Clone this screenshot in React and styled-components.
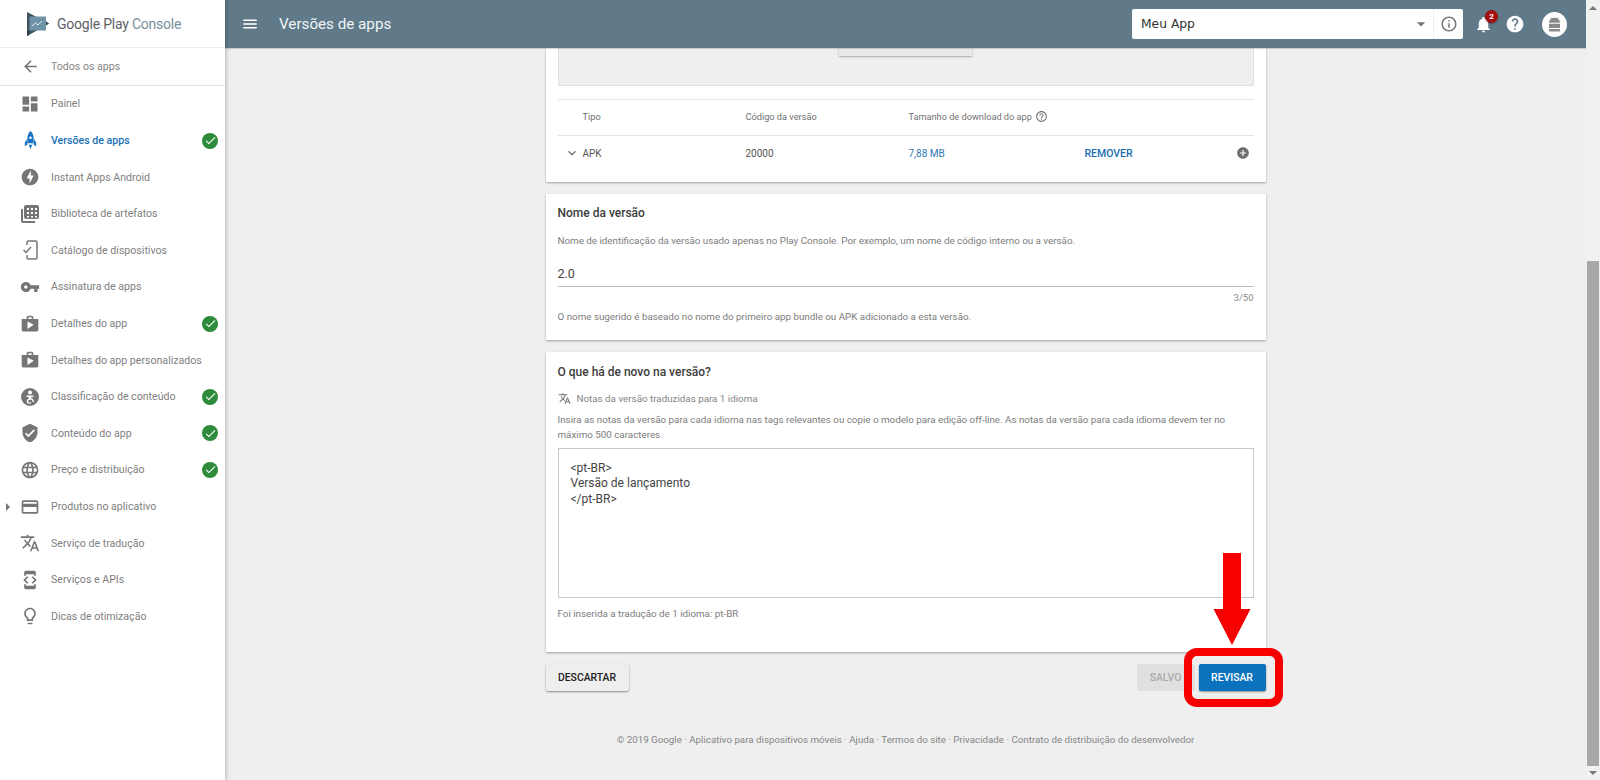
import React from 'react';
import styled, { createGlobalStyle } from 'styled-components';
import {
  MdArrowBack, MdDashboard, MdOfflineBolt, MdVpnKey, MdShop, MdVerifiedUser, MdLanguage,
  MdCreditCard, MdTranslate, MdDeveloperMode, MdLightbulbOutline, MdMenu, MdArrowDropDown,
  MdInfoOutline, MdNotifications, MdHelp, MdAddCircle, MdExpandMore, MdHelpOutline,
  MdCheck,
} from 'react-icons/md';

const GlobalStyle = createGlobalStyle`
  html, body { margin: 0; height: 100%; overflow: hidden; background: #efefef; }
  body { font-family: Roboto, "Liberation Sans", sans-serif; color: #212121; }
  #root { height: 100%; }
`;

const Page = styled.div`
  display: flex;
  height: 780px;
  width: 1600px;
  overflow: hidden;
`;

const Sidebar = styled.aside`
  flex: 0 0 225px;
  background: #fff;
  box-shadow: 1px 0 4px rgba(0, 0, 0, 0.25);
  z-index: 3;
`;

const Brand = styled.div`
  height: 47px;
  display: flex;
  align-items: center;
  padding-left: 26px;
  border-bottom: 1px solid #ececec;
`;

const BrandName = styled.span`
  margin-left: 7px;
  font-size: 14px;
  letter-spacing: -0.22px;
  color: #5f6368;
`;

const BrandLight = styled.span`
  color: #78909c;
`;

const BackRow = styled.div`
  height: 36.7px;
  display: flex;
  align-items: center;
  padding-left: 21px;
  gap: 11px;
  border-bottom: 1px solid #e4e4e4;
  font-size: 10.6px;
  color: #858585;
  svg { color: #757575; }
`;

const NavRow = styled.div`
  height: 36.6px;
  display: flex;
  align-items: center;
  padding-right: 7px;
  font-size: 10.6px;
  color: ${p => (p.$active ? '#1a6fb5' : '#808080')};
  font-weight: ${p => (p.$active ? 500 : 400)};
`;

const CaretSlot = styled.div`
  width: 20px;
  display: flex;
  justify-content: center;
  padding-right: 4px;
  box-sizing: border-box;
`;

const Caret = styled.div`
  border-left: 4px solid #757575;
  border-top: 4px solid transparent;
  border-bottom: 4px solid transparent;
`;

const NavIcon = styled.div`
  width: 20px;
  height: 20px;
  margin-right: 11px;
  display: flex;
  align-items: center;
  justify-content: center;
  color: ${p => (p.$active ? '#1a73c0' : '#757575')};
`;

const CheckBadge = styled.div`
  margin-left: auto;
  width: 16px;
  height: 16px;
  border-radius: 50%;
  background: #2e8b3a;
  color: #fff;
  display: flex;
  align-items: center;
  justify-content: center;
`;

const MainColumn = styled.div`
  flex: 1;
  min-width: 0;
  display: flex;
  flex-direction: column;
`;

const TopBar = styled.header`
  height: 48px;
  flex: none;
  background: #607a89;
  display: flex;
  align-items: center;
  color: #fff;
  padding-left: 16px;
  box-shadow: 0 1px 1px rgba(0, 0, 0, 0.15);
  z-index: 2;
`;

const PageTitle = styled.div`
  margin-left: 20px;
  font-size: 15.2px;
  color: #f2f5f6;
`;

const AppSelect = styled.div`
  margin-left: auto;
  width: 331px;
  height: 30px;
  background: #fff;
  border-radius: 2px;
  display: flex;
  align-items: center;
  padding-left: 9px;
  box-sizing: border-box;
  color: #333;
  font-family: "DejaVu Sans", sans-serif;
  font-size: 12.3px;
`;

const SelectValue = styled.span`
  flex: 1;
`;

const SelectInfo = styled.div`
  width: 29px;
  height: 30px;
  margin-left: 2px;
  border-left: 1px solid #eee;
  display: flex;
  align-items: center;
  justify-content: center;
  color: #757575;
`;

const BarIcons = styled.div`
  display: flex;
  align-items: center;
  margin-left: 8px;
  margin-right: 19px;
`;

const BellWrap = styled.div`
  position: relative;
  width: 24px;
  height: 24px;
  display: flex;
  align-items: center;
  justify-content: center;
  margin-right: 10px;
`;

const Badge = styled.span`
  position: absolute;
  top: -2px;
  right: -3px;
  width: 13px;
  height: 13px;
  border-radius: 50%;
  background: #a50e0e;
  color: #fff;
  font-size: 8px;
  font-weight: 700;
  line-height: 13px;
  text-align: center;
  box-shadow: 0 1px 2px rgba(0, 0, 0, 0.3);
`;

const Avatar = styled.div`
  width: 25px;
  height: 25px;
  margin-left: 17px;
  border-radius: 50%;
  background: #fff;
  color: #8a8a8a;
  display: flex;
  align-items: center;
  justify-content: center;
`;

const Content = styled.main`
  flex: 1;
  width: 720px;
  margin: 0 auto;
  display: flex;
  flex-direction: column;
`;

const Card = styled.section`
  background: #fff;
  padding: ${p => p.$padding};
  margin-bottom: 12px;
  box-shadow: 0 1px 2px rgba(0, 0, 0, 0.32);
`;

const DropZone = styled.div`
  height: 38px;
  background: #efefef;
  border: 1px solid #e2e2e2;
  border-top: 0;
  box-sizing: border-box;
  display: flex;
  justify-content: center;
`;

const ClippedButton = styled.div`
  width: 133px;
  height: 8px;
  background: #e8e8e8;
  box-shadow: 0 1px 2px rgba(0, 0, 0, 0.3);
`;

const BundleTable = styled.div`
  margin-top: 13px;
  border-top: 1px solid #e4e4e4;
`;

const BundleRow = styled.div`
  height: ${p => (p.$head ? '36px' : '34px')};
  margin-bottom: ${p => (p.$head ? '0' : '2px')};
  padding-bottom: ${p => (p.$head ? '2px' : '0')};
  box-sizing: border-box;
  display: grid;
  grid-template-columns: 25px 163px 163px 176px 1fr 24px;
  align-items: center;
  font-size: ${p => (p.$head ? '9.2px' : '10px')};
  color: ${p => (p.$head ? '#6f6f6f' : '#555')};
  border-bottom: ${p => (p.$head ? '1px solid #e4e4e4' : '0')};
`;

const ToggleCell = styled.div`
  display: flex;
  justify-content: flex-end;
  padding-right: 3px;
  color: #757575;
`;

const SizeHead = styled.div`
  display: flex;
  align-items: center;
  gap: 3px;
  white-space: nowrap;
  color: #757575;
`;

const SizeValue = styled.div`
  color: #2f77b5;
`;

const RemoveLink = styled.div`
  color: #1a6eb0;
  font-weight: 500;
  font-size: 10.5px;
`;

const PlusCell = styled.div`
  color: #6f6f6f;
  display: flex;
  justify-content: flex-end;
  padding-right: 4px;
`;

const CardTitle = styled.h2`
  margin: 0;
  font-size: 12px;
  line-height: 14px;
  font-weight: 500;
  color: #3c3c3c;
`;

const Hint = styled.p`
  margin: ${p => p.$margin || '0'};
  font-size: 9.8px;
  line-height: 15.3px;
  color: #7d7d7d;
`;

const TextValue = styled.div`
  margin-top: 10.5px;
  height: 29px;
  box-sizing: border-box;
  border-bottom: 1px solid #bdbdbd;
  font-size: 12.5px;
  line-height: 31px;
  color: #444;
`;

const Counter = styled.div`
  margin-top: 5px;
  text-align: right;
  font-size: 9.5px;
  line-height: 12px;
  color: #8a8a8a;
`;

const TranslationLine = styled.div`
  margin-top: 12.5px;
  display: flex;
  align-items: center;
  gap: 6px;
  height: 15px;
  font-size: 9.8px;
  color: #858585;
  svg { color: #757575; }
`;

const NotesInput = styled.textarea`
  display: block;
  width: 100%;
  height: 150px;
  margin-top: 5px;
  padding: 12px 12px;
  box-sizing: border-box;
  border: 1px solid #c8c8c8;
  border-radius: 0;
  resize: none;
  outline: none;
  font-family: Roboto, sans-serif;
  font-size: 12px;
  line-height: 15.4px;
  color: #444;
`;

const ActionBar = styled.div`
  display: flex;
  align-items: flex-start;
  justify-content: space-between;
`;

const ActionGroup = styled.div`
  display: flex;
  gap: 4px;
`;

const Button = styled.button`
  height: 27px;
  width: ${p => p.$width};
  border: 0;
  border-radius: 2px;
  padding: 0;
  font-family: Roboto, sans-serif;
  font-size: 10.4px;
  font-weight: 500;
  background: ${p => p.$bg};
  color: ${p => p.$color};
  box-shadow: ${p => (p.$flat ? 'none' : '0 1px 2px rgba(0, 0, 0, 0.4)')};
`;

const RevisarSlot = styled.div`
  position: relative;
`;

const RedFrame = styled.div`
  position: absolute;
  top: -16px;
  left: -15px;
  width: 99px;
  height: 59px;
  box-sizing: border-box;
  border: 8px solid #f60000;
  border-radius: 13px;
`;

const RedArrow = styled.svg`
  position: absolute;
  top: -111px;
  left: 14px;
`;

const Footer = styled.footer`
  margin-top: 43px;
  text-align: center;
  font-size: 9.75px;
  line-height: 12px;
  color: #858585;
  white-space: nowrap;
`;

const ScrollBar = styled.div`
  flex: 0 0 14px;
  height: 780px;
  background: #f1f1f1;
  display: flex;
  flex-direction: column;
  align-items: center;
  z-index: 4;
`;

const ScrollArrow = styled.div`
  width: 0;
  height: 0;
  margin: ${p => p.$margin};
  border-left: 4px solid transparent;
  border-right: 4px solid transparent;
  border-${p => (p.$up ? 'bottom' : 'top')}: 4px solid #777;
`;

const ScrollThumb = styled.div`
  width: 12px;
  height: 505px;
  margin-top: auto;
  background: #a8a8a8;
`;

const RocketIcon = () => (
  <svg width="17" height="19" viewBox="0 0 18 20" fill="currentColor">
    <path d="M9 0c2.300 2 3.300 4.600 3.300 7.600v5.200H5.700V7.600C5.700 4.600 6.700 2 9 0z" />
    <path d="M5.300 8.500 3 12v4l2.800-1.800zM12.700 8.500 15 12v4l-2.800-1.800zM7 14.500h4L9 19z" />
    <circle cx="9" cy="7" r="1.300" fill="#fff" />
  </svg>
);

const LibraryIcon = () => (
  <svg width="20" height="20" viewBox="0 0 20 20" fill="currentColor">
    <path d="M1 5h2v12h12v2H3a2 2 0 0 1-2-2z" />
    <path d="M6 1h11a2 2 0 0 1 2 2v10a2 2 0 0 1-2 2H6a2 2 0 0 1-2-2V3a2 2 0 0 1 2-2zm1 3v2h2V4zm4 0v2h2V4zm4 0v2h2V4zM7 8v2h2V8zm4 0v2h2V8zm4 0v2h2V8zm-8 4v1.500h2V12zm4 0v1.500h2V12zm4 0v1.500h2V12z" fillRule="evenodd" />
  </svg>
);

const CatalogIcon = () => (
  <svg width="20" height="20" viewBox="0 0 20 20" fill="none" stroke="currentColor" strokeWidth="1.500">
    <path d="M7 5V2.500A1.500 1.500 0 0 1 8.500 1h7A1.500 1.500 0 0 1 17 2.500v15a1.500 1.500 0 0 1-1.500 1.500h-7A1.500 1.500 0 0 1 7 17.500V15" />
    <path d="m3.500 10 2.500 2.500L11 7" />
  </svg>
);

const RatingIcon = () => (
  <svg width="20" height="20" viewBox="0 0 20 20" fill="currentColor">
    <path fillRule="evenodd" d="M10 1a9 9 0 1 1 0 18 9 9 0 0 1 0-18zm0 2.500a2 2 0 1 0 0 4 2 2 0 0 0 0-4zM6.500 8.500v1.500h2.200v1.500a3 3 0 0 0-2 2.800 2.500 2.500 0 0 0 4.800 1h-1.500a1.100 1.100 0 0 1-1.800-1 1.500 1.500 0 0 1 1.300-1.500h2.200l1.200 2.500 1.200-.6-1.500-3.200h-1.300V10h2.200V8.500z" />
  </svg>
);

const RobotIcon = () => (
  <svg width="17" height="17" viewBox="0 0 17 17" fill="currentColor">
    <path d="M3 6.800a5.500 5 0 0 1 11 0z" />
    <path d="M5 1.500 6.500 3.500M12 1.500 10.500 3.500" stroke="currentColor" strokeWidth="1" />
    <path d="M3 7.800h11v4.200H3zM3 13h11v1.500a1 1 0 0 1-1 1H4a1 1 0 0 1-1-1z" />
  </svg>
);

const LogoMark = () => (
  <svg width="24" height="26" viewBox="0 0 24 26">
    <path d="M1 1 3 2 23 12.500 3 24 1 25z" fill="#3f5561" />
    <path d="M3.500 5.500H20v14H3.500z" fill="#6f93a6" />
    <path d="m6 15 3.500-3 2.500 2 4-4" fill="none" stroke="#dfe9ee" strokeWidth="1" />
    <path d="M20 10.200 23 12.500 20 14.500z" fill="#3f5561" />
    <path d="M1 25 3 24 3.500 19.500 1 20z" fill="#2b3c45" />
  </svg>
);

const navItems = [
  { label: 'Painel', icon: <MdDashboard size={20} /> },
  { label: 'Versões de apps', icon: <RocketIcon />, active: true, done: true },
  { label: 'Instant Apps Android', icon: <MdOfflineBolt size={20} /> },
  { label: 'Biblioteca de artefatos', icon: <LibraryIcon /> },
  { label: 'Catálogo de dispositivos', icon: <CatalogIcon /> },
  { label: 'Assinatura de apps', icon: <MdVpnKey size={20} /> },
  { label: 'Detalhes do app', icon: <MdShop size={20} />, done: true },
  { label: 'Detalhes do app personalizados', icon: <MdShop size={20} /> },
  { label: 'Classificação de conteúdo', icon: <RatingIcon />, done: true },
  { label: 'Conteúdo do app', icon: <MdVerifiedUser size={20} />, done: true },
  { label: 'Preço e distribuição', icon: <MdLanguage size={20} />, done: true },
  { label: 'Produtos no aplicativo', icon: <MdCreditCard size={20} />, expandable: true },
  { label: 'Serviço de tradução', icon: <MdTranslate size={20} /> },
  { label: 'Serviços e APIs', icon: <MdDeveloperMode size={20} /> },
  { label: 'Dicas de otimização', icon: <MdLightbulbOutline size={20} /> },
];

const notes = '<pt-BR>\nVersão de lançamento\n</pt-BR>';

export default function App() {
  return (
    <Page>
      <GlobalStyle />
      <Sidebar>
        <Brand>
          <LogoMark />
          <BrandName>Google Play <BrandLight>Console</BrandLight></BrandName>
        </Brand>
        <BackRow>
          <MdArrowBack size={19} />
          Todos os apps
        </BackRow>
        {navItems.map(item => (
          <NavRow key={item.label} $active={item.active}>
            <CaretSlot>{item.expandable && <Caret />}</CaretSlot>
            <NavIcon $active={item.active}>{item.icon}</NavIcon>
            {item.label}
            {item.done && <CheckBadge><MdCheck size={13} /></CheckBadge>}
          </NavRow>
        ))}
      </Sidebar>

      <MainColumn>
        <TopBar>
          <MdMenu size={18} />
          <PageTitle>Versões de apps</PageTitle>
          <AppSelect>
            <SelectValue>Meu App</SelectValue>
            <MdArrowDropDown size={20} color="#757575" />
            <SelectInfo><MdInfoOutline size={18} /></SelectInfo>
          </AppSelect>
          <BarIcons>
            <BellWrap>
              <MdNotifications size={19} />
              <Badge>2</Badge>
            </BellWrap>
            <MdHelp size={20} />
            <Avatar><RobotIcon /></Avatar>
          </BarIcons>
        </TopBar>

        <Content>
          <Card $padding="0 12px 10px">
            <DropZone><ClippedButton /></DropZone>
            <BundleTable>
              <BundleRow $head>
                <span />
                <span>Tipo</span>
                <span>Código da versão</span>
                <SizeHead>Tamanho de download do app <MdHelpOutline size={13} /></SizeHead>
              </BundleRow>
              <BundleRow>
                <ToggleCell><MdExpandMore size={16} /></ToggleCell>
                <span>APK</span>
                <span>20000</span>
                <SizeValue>7,88 MB</SizeValue>
                <RemoveLink>REMOVER</RemoveLink>
                <PlusCell><MdAddCircle size={14} /></PlusCell>
              </BundleRow>
            </BundleTable>
          </Card>

          <Card $padding="12px 12px 15px">
            <CardTitle>Nome da versão</CardTitle>
            <Hint $margin="12.5px 0 0">Nome de identificação da versão usado apenas no Play Console. Por exemplo, um nome de código interno ou a versão.</Hint>
            <TextValue>2.0</TextValue>
            <Counter>3/50</Counter>
            <Hint $margin="5px 0 0">O nome sugerido é baseado no nome do primeiro app bundle ou APK adicionado a esta versão.</Hint>
          </Card>

          <Card $padding="13px 12px 31px">
            <CardTitle>O que há de novo na versão?</CardTitle>
            <TranslationLine>
              <MdTranslate size={13} />
              Notas da versão traduzidas para 1 idioma
            </TranslationLine>
            <Hint $margin="6px 0 0">Insira as notas da versão para cada idioma nas tags relevantes ou copie o modelo para edição off-line. As notas da versão para cada idioma devem ter no máximo 500 caracteres.</Hint>
            <NotesInput readOnly value={notes} />
            <Hint $margin="8.5px 0 0">Foi inserida a tradução de 1 idioma: pt-BR</Hint>
          </Card>

          <ActionBar>
            <Button $width="83px" $bg="#eeeeee" $color="#222">DESCARTAR</Button>
            <ActionGroup>
              <Button $width="58px" $bg="#e0e0e0" $color="#a8a8a8" $flat>SALVO</Button>
              <RevisarSlot>
                <Button $width="67px" $bg="#0b73bd" $color="#fff">REVISAR</Button>
                <RedFrame />
                <RedArrow width="38" height="92" viewBox="0 0 38 92">
                  <path d="M10 0h18v56h9.500L19 92 .5 56H10z" fill="#f60000" />
                </RedArrow>
              </RevisarSlot>
            </ActionGroup>
          </ActionBar>

          <Footer>© 2019 Google · Aplicativo para dispositivos móveis · Ajuda · Termos do site · Privacidade · Contrato de distribuição do desenvolvedor</Footer>
        </Content>
      </MainColumn>

      <ScrollBar>
        <ScrollArrow $up $margin="6px 0 0" />
        <ScrollThumb />
        <ScrollArrow $margin="5px 0 5px" />
      </ScrollBar>
    </Page>
  );
}
